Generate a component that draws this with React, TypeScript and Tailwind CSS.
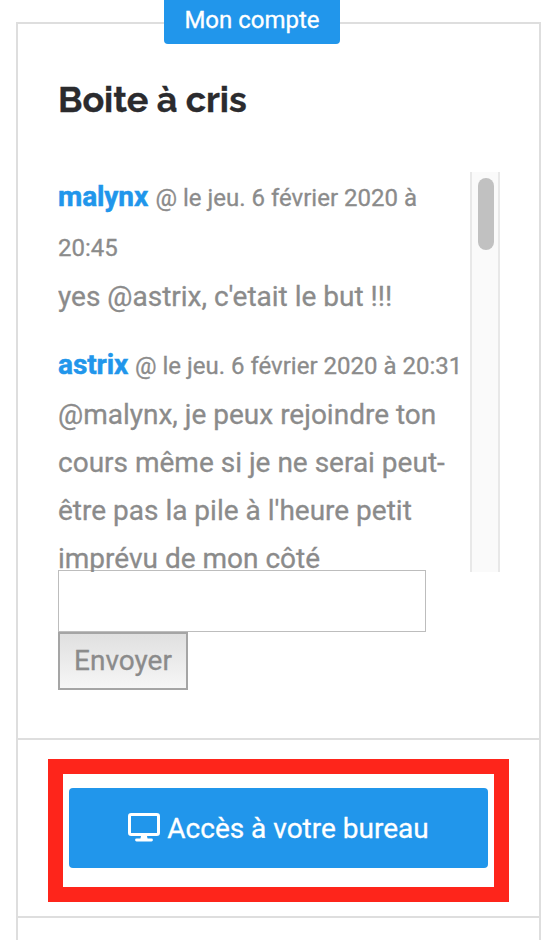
import React from "react";

function Row({ text, className = "" }: { text: React.ReactNode; className?: string }) {
  return <p className={`whitespace-nowrap ${className}`}>{text}</p>;
}

function Author({ name, rest, widthClass }: { name: string; rest: string; widthClass: string }) {
  return (
    <p className="flex items-baseline whitespace-nowrap text-[28px] leading-[48px]">
      <b className={`${widthClass} font-bold tracking-[-0.1px] text-[#2196eb] [-webkit-text-stroke:0.5px_#2196eb]`}>{name}</b>
      <span className="text-[24px]">{rest}</span>
    </p>
  );
}

export default function App() {
  return (
    <div className="h-[940px] w-[552px] overflow-hidden bg-white font-['Roboto',sans-serif] text-[28px] text-[#8b8b8b] [-webkit-text-stroke:0.3px]">
      <div className="relative ml-4 mt-[22px] h-[918px] w-[525px] border-2 border-b-0 border-[#dedede]">
        <div className="absolute -top-6 left-[146px] flex h-[44px] w-[176px] justify-center rounded-b-[4px] bg-[#2196eb] text-[24px] leading-[40px] text-white">
          Mon compte
        </div>
        <section className="h-[716px] border-b-2 border-[#dedede] px-10 pt-[51px]">
          <h2 className="h-[97px] whitespace-nowrap font-['Raleway','Lato',sans-serif] text-[36px] font-bold leading-[48px] tracking-[-0.1px] text-[#2b2b2e]">
            Boite à cris
          </h2>
          <div className="relative flex h-[400px] w-[442px] justify-between overflow-hidden">
            <div className="w-[412px] pt-px leading-[48px]">
              <Author name="malynx" rest="@ le jeu. 6 février 2020 à" widthClass="w-[97.5px]" />
              <Row text="20:45" className="h-[51px] text-[24px] leading-[52px]" />
              <Row text="yes @astrix, c'etait le but !!!" />
              <div className="mt-[20px]">
                <Author name="astrix" rest="@ le jeu. 6 février 2020 à 20:31" widthClass="w-[77px]" />
                <div className="pt-px">
                  <Row text="@malynx, je peux rejoindre ton" />
                  <Row text="cours même si je ne serai peut-" />
                  <Row text="être pas la pile à l'heure petit" />
                  <Row text="imprévu de mon côté" />
                </div>
              </div>
            </div>
            <div className="h-[400px] w-[30px] border-x-2 border-[#e8e8e8] bg-[#fafafa] pl-[6px] pt-[6px]">
              <div className="h-[72px] w-4 rounded-full bg-[#c1c1c1]" />
            </div>
          </div>
          <input aria-label="Message" className="-mt-[2px] block h-[62px] w-[368px] border border-[#bdbdbd] bg-white" />
          <button className="block h-[58px] w-[130px] border-2 border-[#a5a5a5] bg-linear-to-b from-[#e0e0e0] to-[#f6f6f6] leading-[52px]">Envoyer</button>
        </section>
        <section className="h-[178px] border-b-2 border-[#dedede] pl-[30px] pt-[19px]">
          <div className="h-[143px] w-[461px] border-[15px] border-[#fe251b] px-[6px] pt-[14px]">
            <button className="flex h-20 w-[419px] items-center justify-center gap-[7px] rounded-[4px] bg-[#2196eb] text-white">
              <svg width="32" height="29" viewBox="0 0 32 29" className="mb-[2px] shrink-0" fill="none" stroke="currentColor" strokeWidth="3">
                <rect x="1.5" y="1.5" width="29" height="20" rx="1.8" />
                <path d="M13.2 22h5.6l.8 4h-7.2Z" fill="currentColor" stroke="none" />
                <path d="M8.5 27h15" strokeWidth="2.8" strokeLinecap="round" />
              </svg>
              <span className="relative top-px">Accès à votre bureau</span>
            </button>
          </div>
        </section>
      </div>
    </div>
  );
}
